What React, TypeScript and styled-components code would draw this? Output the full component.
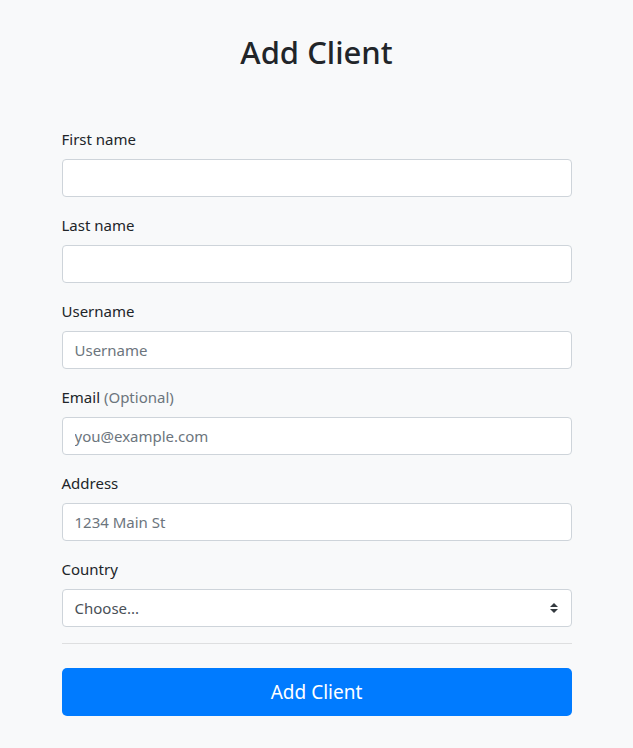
import React from "react";
import styled, { createGlobalStyle } from "styled-components";

const Global = createGlobalStyle`
  html, body { margin: 0; padding: 0; background: #f8f9fa; }
  body { font-family: "Noto Sans", "Open Sans", sans-serif; color: #212529; font-size: 16px; }
  * { box-sizing: border-box; }
`;

const Page = styled.div`
  min-height: 748px;
  background: #f8f9fa;
  padding-top: 33px;
`;

const Title = styled.h2`
  margin: 0 0 56px;
  text-align: center;
  font-size: 31px;
  font-weight: 500;
  line-height: 38px;
  color: #212529;
`;

const Form = styled.form`
  width: 510px;
  margin: 0 auto;
  display: flex;
  flex-direction: column;
`;

const Group = styled.div`
  display: flex;
  flex-direction: column;
  margin-bottom: 16px;
`;

const Label = styled.label`
  font-size: 15px;
  line-height: 24px;
  margin-bottom: 8px;
  color: #212529;
`;

const Muted = styled.span`
  color: #6c757d;
`;

const Input = styled.input`
  height: 38px;
  width: 100%;
  padding: 6px 12px;
  font-family: inherit;
  font-size: 15px;
  color: #495057;
  background: #fff;
  border: 1px solid #ced4da;
  border-radius: 4px;
  outline: none;
  &::placeholder { color: #6c757d; opacity: 1; }
`;

const SelectBox = styled.div`
  height: 38px;
  width: 100%;
  padding: 6px 12px;
  font-size: 15px;
  line-height: 24px;
  color: #495057;
  background: #fff;
  border: 1px solid #ced4da;
  border-radius: 4px;
  display: flex;
  align-items: center;
  justify-content: space-between;
`;

const Arrow = styled.svg`
  width: 8px;
  height: 10px;
  margin-right: 1px;
`;

const Rule = styled.hr`
  width: 100%;
  margin: 0 0 24px;
  border: 0;
  border-top: 1px solid rgba(0, 0, 0, 0.1);
`;

const Button = styled.button`
  height: 48px;
  width: 100%;
  border: 0;
  border-radius: 5px;
  background: #007bff;
  color: #fff;
  font-family: inherit;
  font-size: 19px;
  cursor: pointer;
`;

const fields = [
  { label: "First name", placeholder: "" },
  { label: "Last name", placeholder: "" },
  { label: "Username", placeholder: "Username" },
  { label: "Email", optional: true, placeholder: "you@example.com" },
  { label: "Address", placeholder: "1234 Main St" },
];

export default function App() {
  return (
    <Page>
      <Global />
      <Title>Add Client</Title>
      <Form onSubmit={(e) => e.preventDefault()}>
        {fields.map((f) => (
          <Group key={f.label}>
            <Label>
              {f.label}
              {f.optional && <Muted> (Optional)</Muted>}
            </Label>
            <Input placeholder={f.placeholder} />
          </Group>
        ))}
        <Group>
          <Label>Country</Label>
          <SelectBox>
            <span>Choose...</span>
            <Arrow viewBox="0 0 4 5">
              <path fill="#343a40" d="M2 0L0 2h4zm0 5L0 3h4z" />
            </Arrow>
          </SelectBox>
        </Group>
        <Rule />
        <Button type="button">Add Client</Button>
      </Form>
    </Page>
  );
}
